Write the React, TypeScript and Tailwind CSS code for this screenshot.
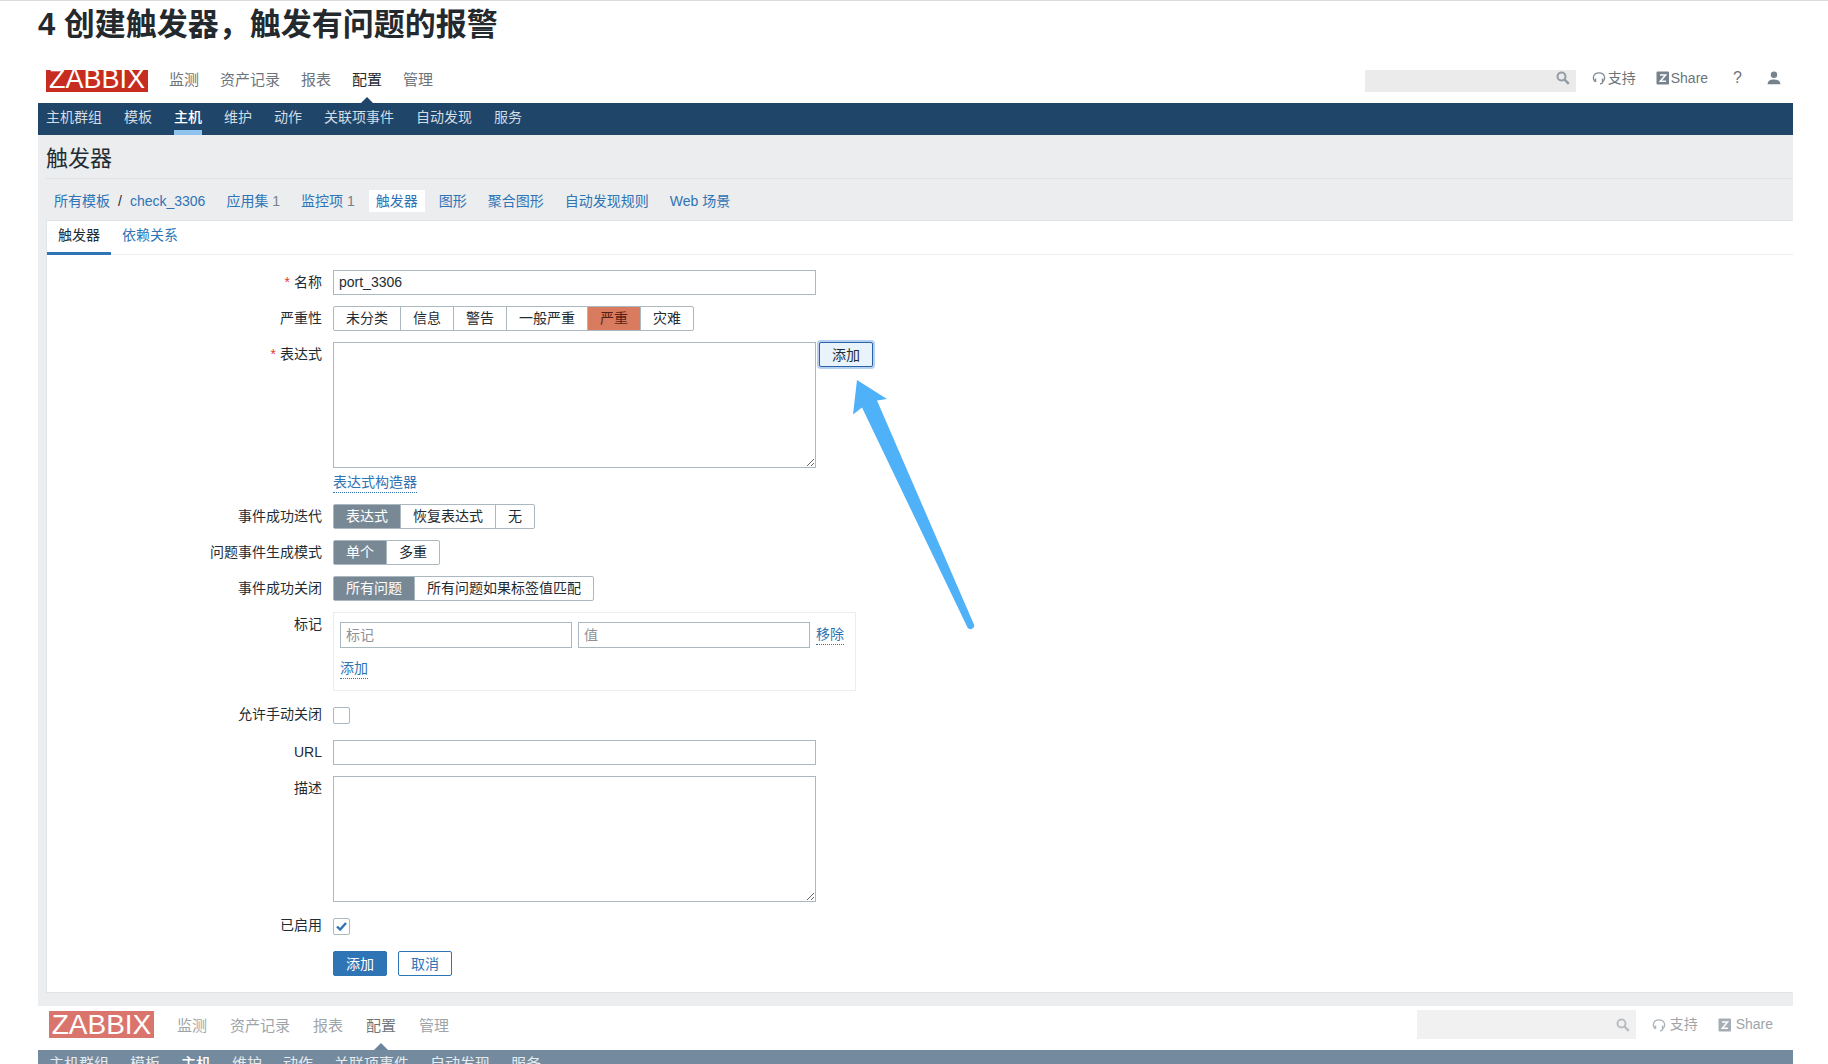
import { ReactNode, useState } from "react";

const mainMenu = ["监测", "资产记录", "报表", "配置", "管理"]
const subMenu = ["主机群组", "模板", "主机", "维护", "动作", "关联项事件", "自动发现", "服务"]
const severities = ["未分类", "信息", "警告", "一般严重", "严重", "灾难"]
const crumbs = [
    { text: "应用集", count: 1 },
    { text: "监控项", count: 1 },
    { text: "触发器" },
    { text: "图形" },
    { text: "聚合图形" },
    { text: "自动发现规则" },
    { text: "Web 场景" },
]

const field = "block border border-[#acb8c0] bg-white px-[5px] text-sm outline-none placeholder:text-[#8e9399]"
const dotted = "border-b border-dotted border-[#2f74b5] text-[#2f74b5] leading-5 cursor-pointer"

function SearchIcon() {
    return (
        <svg className="size-3.5" viewBox="0 0 14 14" fill="none" stroke="#939ca4">
            <circle cx="5.5" cy="5.5" r="4" strokeWidth="2"/>
            <path d="M8.6 8.6 12.8 12.8" strokeWidth="2.4"/>
        </svg>
    )
}

function SupportIcon() {
    return (
        <svg className="size-3.5" viewBox="0 0 14 14" fill="none" stroke="#808b94">
            <path d="M3 10.6C.4 8.4.6 1.900 7 1.900s6.600 6.500 4 8.700" strokeWidth="1.300"/>
            <path d="M3.400 7.400v3.600M10.600 7.400v3.600" strokeWidth="1.600"/>
            <path d="M10.800 10.800c0 1.500-1 2-2.800 2" strokeWidth="1.200"/>
        </svg>
    )
}

function ShareIcon() {
    return (
        <svg className="size-3.5" viewBox="0 0 14 14">
            <rect x="0.5" y="0.5" width="12.5" height="13" rx="1" fill="#76838d"/>
            <path d="M4 4h5.600L4.300 10.200H10" fill="none" stroke="#fff" strokeWidth="1.500"/>
        </svg>
    )
}

function UserIcon() {
    return (
        <svg className="size-3.5" viewBox="0 0 14 14" fill="#76838d">
            <circle cx="7" cy="3.800" r="3.200"/>
            <path d="M.6 13.200C.8 10 3 8.600 7 8.600s6.200 1.400 6.400 4.600z"/>
        </svg>
    )
}

function Pointer({ color }: { color: string }) {
    return (
        <svg className="absolute top-full left-1/2 mt-[5px] h-[9px] w-[18px] -translate-x-1/2" viewBox="0 0 18 9">
            <path d="M0 9 9 0l9 9z" fill={color}/>
        </svg>
    )
}

// top header with the main menu
function Header() {
    return (
        <header className="flex h-[33px] items-start justify-between overflow-hidden pl-2">
            <div className="flex">
                <a href="#" className="flex h-[22px] w-[102px] items-end justify-center overflow-hidden bg-[#c72c20] text-[27px] leading-[26px] text-white">ZABBIX</a>
                <nav className="ml-[21px] flex gap-[21px] text-[15px] leading-[19px]">
                    {mainMenu.map((item) => (
                        <a key={item} href="#" className={item === "配置" ? "relative text-[#1f2c33]" : "text-[#6c747b]"}>
                            {item}
                            {item === "配置" && <Pointer color="#1f4568"/>}
                        </a>
                    ))}
                </nav>
            </div>
            <div className="flex items-start pr-3 text-sm leading-4 text-[#6c747b]">
                <div className="flex h-[22px] w-[211px] bg-[#ebebeb]">
                    <input aria-label="搜索" className="min-w-0 flex-1 px-1 outline-none"/>
                    <button aria-label="搜索" className="mr-1.5 flex pt-px"><SearchIcon/></button>
                </div>
                <a href="#" className="ml-4 flex items-center gap-0.5"><SupportIcon/>支持</a>
                <a href="#" className="ml-5 flex items-center gap-px"><ShareIcon/>Share</a>
                <a href="#" className="ml-[25px] text-base leading-4">?</a>
                <a href="#" aria-label="用户" className="ml-[25px] pt-px"><UserIcon/></a>
            </div>
        </header>
    )
}

// the next screen, still faded out at the bottom of the page
function FadedScreen() {
    return (
        <div className="overflow-hidden">
            <header className="flex h-11 items-start justify-between overflow-hidden pt-1 pl-[11px] opacity-65">
                <div className="flex">
                    <a href="#" className="mt-px flex h-[27px] w-[105px] items-center justify-center bg-[#c72c20] text-[28px] leading-[27px] text-white">ZABBIX</a>
                    <nav className="ml-[23px] flex gap-[23px] pt-[5px] text-[15px] leading-[21px]">
                        {mainMenu.map((item) => (
                            <a key={item} href="#" className={item === "配置" ? "relative text-[#1f2c33]" : "text-[#6c747b]"}>
                                {item}
                                {item === "配置" && <Pointer color="#1f4568"/>}
                            </a>
                        ))}
                    </nav>
                </div>
                <div className="flex items-start pr-5 text-sm leading-[29px] text-[#6c747b]">
                    <div className="flex h-[29px] w-[219px] items-center bg-[#ebebeb]">
                        <input aria-label="搜索" className="min-w-0 flex-1 px-1 outline-none"/>
                        <button aria-label="搜索" className="mr-1.5"><SearchIcon/></button>
                    </div>
                    <a href="#" className="ml-4 flex items-center gap-1"><SupportIcon/>支持</a>
                    <a href="#" className="ml-5 flex items-center gap-1"><ShareIcon/>Share</a>
                </div>
            </header>
            <nav className="flex h-8 gap-[21px] bg-[#748b9f] pl-[11px] text-[15px] leading-7 text-[#e6ebef]">
                {subMenu.map((item) => (
                    <a key={item} href="#" className={item === "主机" ? "font-medium text-white" : ""}>{item}</a>
                ))}
            </nav>
        </div>
    )
}

function Row({ label, htmlFor, required, children }: { label?: string, htmlFor?: string, required?: boolean, children: ReactNode }) {
    return (
        <div className="flex gap-[11px]">
            <div className="w-[275px] shrink-0 text-right leading-6">
                {required && <span className="mr-1 text-[#e33734]">*</span>}
                {label && <label htmlFor={htmlFor}>{label}</label>}
            </div>
            {children}
        </div>
    )
}

function Segments({ name, items, initial, activeClass }: { name: string, items: string[], initial: string, activeClass: string }) {
    const [value, setValue] = useState(initial)

    return (
        <div role="radiogroup" aria-label={name} className="flex h-[25px] rounded-xs border border-[#acb8c0]">
            {items.map((item) => (
                <label
                    key={item}
                    className={`relative cursor-pointer border-l border-[#acb8c0] px-3 leading-[22px] first:border-l-0 ${item === value ? activeClass : ""}`}>
                    <input
                        className="sr-only"
                        type="radio"
                        name={name}
                        checked={item === value}
                        onChange={() => setValue(item)}/>
                    {item}
                </label>
            ))}
        </div>
    )
}

function Check({ id, checked }: { id: string, checked?: boolean }) {
    return (
        <div className="grid h-[27px] place-items-center">
            <input
                id={id}
                type="checkbox"
                defaultChecked={checked}
                className="peer col-start-1 row-start-1 size-[17px] appearance-none rounded-xs border border-[#acb8c0] bg-white"/>
            <svg className="pointer-events-none invisible col-start-1 row-start-1 size-[11px] peer-checked:visible" viewBox="0 0 11 11">
                <path d="M1 5.500 4.200 8.600 10 2" fill="none" stroke="#2f74b5" strokeWidth="2.400"/>
            </svg>
        </div>
    )
}

function TriggerForm() {
    return (
        <form className="flex flex-col gap-[11px] pt-[15px] pb-4" onSubmit={(event) => event.preventDefault()}>
            <Row label="名称" htmlFor="name" required>
                <input id="name" defaultValue="port_3306" className={`${field} h-[25px] w-[483px] pb-0.5`}/>
            </Row>
            <Row label="严重性">
                <Segments name="严重性" items={severities} initial="严重" activeClass="bg-[#d97b5e] text-[#5a1f14]"/>
            </Row>
            <Row label="表达式" htmlFor="expression" required>
                <div>
                    <div className="flex items-start gap-[3px]">
                        <textarea id="expression" className={`${field} h-[126px] w-[483px]`}/>
                        <button type="button" className="h-[25px] w-[54px] rounded-xs border border-[#2c62a8] bg-[#e8f3fc] leading-5 ring-2 ring-[#b5d0f0]">添加</button>
                    </div>
                    <div className="flex h-[25px] items-end">
                        <button type="button" className={dotted}>表达式构造器</button>
                    </div>
                </div>
            </Row>
            <Row label="事件成功迭代">
                <Segments name="事件成功迭代" items={["表达式", "恢复表达式", "无"]} initial="表达式" activeClass="bg-[#788995] text-white"/>
            </Row>
            <Row label="问题事件生成模式">
                <Segments name="问题事件生成模式" items={["单个", "多重"]} initial="单个" activeClass="bg-[#788995] text-white"/>
            </Row>
            <Row label="事件成功关闭">
                <Segments name="事件成功关闭" items={["所有问题", "所有问题如果标签值匹配"]} initial="所有问题" activeClass="bg-[#788995] text-white"/>
            </Row>
            <Row label="标记" htmlFor="tag">
                <div className="h-[79px] w-[523px] border border-[#ebeef0] px-1.5 pt-[9px]">
                    <div className="flex items-start gap-1.5">
                        <input id="tag" placeholder="标记" className={`${field} h-[26px] w-[232px]`}/>
                        <input aria-label="值" placeholder="值" className={`${field} h-[26px] w-[232px]`}/>
                        <button type="button" className={`${dotted} mt-0.5`}>移除</button>
                    </div>
                    <button type="button" className={`${dotted} mt-2.5`}>添加</button>
                </div>
            </Row>
            <Row label="允许手动关闭" htmlFor="manual">
                <Check id="manual"/>
            </Row>
            <Row label="URL" htmlFor="url">
                <input id="url" className={`${field} h-[25px] w-[483px]`}/>
            </Row>
            <Row label="描述" htmlFor="description">
                <textarea id="description" className={`${field} h-[126px] w-[483px]`}/>
            </Row>
            <Row label="已启用" htmlFor="enabled">
                <Check id="enabled" checked/>
            </Row>
            <Row>
                <div className="flex gap-[11px]">
                    <button className="h-[25px] w-[54px] rounded-xs border border-[#2f74b5] bg-[#2f74b5] leading-5 text-white">添加</button>
                    <button type="button" className="h-[25px] w-[54px] rounded-xs border border-[#2f74b5] bg-white leading-5 text-[#2f74b5]">取消</button>
                </div>
            </Row>
        </form>
    )
}

function Arrow() {
    return (
        <svg className="pointer-events-none absolute top-[378px] left-[851px] h-[251px] w-[124px]" viewBox="851 379 124 251">
            <path d="M857 380 887 399 877 400.500 973.500 623.500A3.500 3.500 0 0 1 967.500 627.500L862 407.500 853 414.500z" fill="#4fb1f8"/>
        </svg>
    )
}

export default function App() {
    return (
        <div className="relative h-screen overflow-hidden border-t border-[#dcdcdc] bg-white pr-[35px] pl-[38px] font-['Liberation_Sans','Noto_Sans_CJK_SC',sans-serif] text-sm text-[#1f2c33]">
            <h1 className="mb-[22px] pt-px text-[31px] leading-[46px] font-bold text-[#24292e]">4 创建触发器，触发有问题的报警</h1>
            <Header/>
            <nav className="flex h-8 gap-[22px] bg-[#1f4568] pl-2 leading-7 text-[#d3dde6]">
                {subMenu.map((item) => (
                    <a key={item} href="#" className={item === "主机" ? "border-b-5 border-[#90c4ee] font-medium text-white" : ""}>{item}</a>
                ))}
            </nav>
            <main className="bg-[#ebedef] pb-[13px] pl-2">
                <h2 className="border-b border-[#dfe3e6] pt-2 pb-[3px] text-[22px] leading-8">触发器</h2>
                <nav className="flex h-[41px] items-center gap-[7px] pt-0.5 text-[#2f74b5]">
                    <div className="flex gap-2 pr-[7px] pl-2">
                        <a href="#">所有模板</a>
                        <span className="text-[#1f2c33]">/</span>
                        <a href="#">check_3306</a>
                    </div>
                    {crumbs.map((crumb) => (
                        <a key={crumb.text} href="#" className={`px-[7px] leading-[22px] ${crumb.text === "触发器" ? "bg-white" : ""}`}>
                            {crumb.text}
                            {crumb.count && <span className="text-[#768088]"> {crumb.count}</span>}
                        </a>
                    ))}
                </nav>
                <section className="border-y border-l border-[#dfe4e7] bg-white">
                    <div className="flex h-[34px] items-start border-b border-[#ebeef0] leading-7">
                        <button className="h-[34px] border-b-3 border-[#2f74b5] px-[11px] pb-1">触发器</button>
                        <button className="px-[11px] text-[#2f74b5]">依赖关系</button>
                    </div>
                    <TriggerForm/>
                </section>
            </main>
            <FadedScreen/>
            <Arrow/>
        </div>
    )
}
